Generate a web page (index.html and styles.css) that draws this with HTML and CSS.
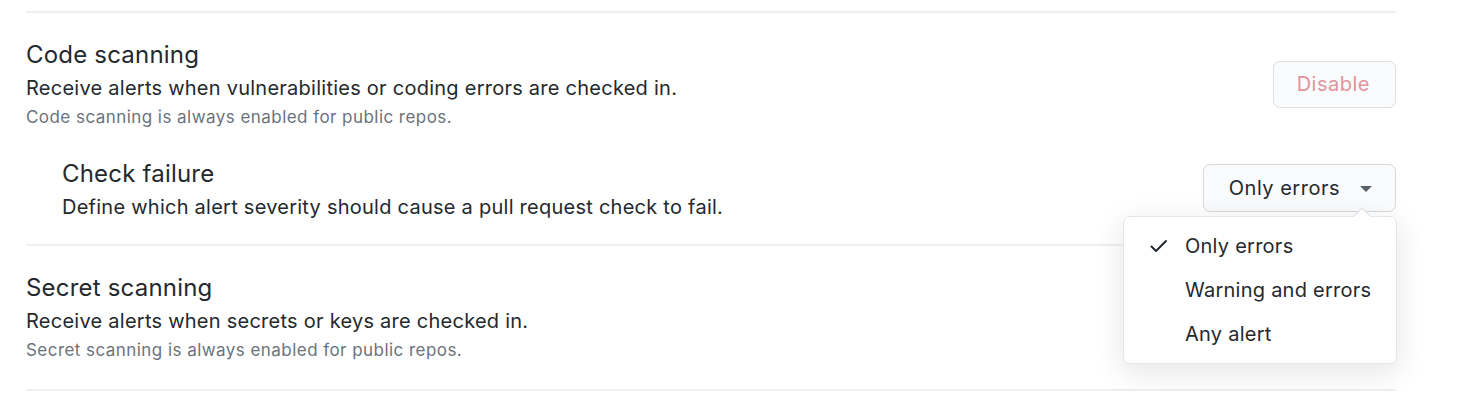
FILE: index.html
```html
<!DOCTYPE html>
<html>
<head>
<meta charset="utf-8">
<link rel="stylesheet" href="styles.css">
</head>
<body>
<div class="page">
  <section class="section first">
    <div class="row">
      <div class="info">
        <h2 class="title">Code scanning</h2>
        <p class="desc">Receive alerts when vulnerabilities or coding errors are checked in.</p>
        <p class="note">Code scanning is always enabled for public repos.</p>
      </div>
      <button class="btn btn-danger" disabled>Disable</button>
    </div>
    <div class="row sub">
      <div class="info">
        <h3 class="title">Check failure</h3>
        <p class="desc">Define which alert severity should cause a pull request check to fail.</p>
      </div>
      <div class="select-wrap">
        <button class="btn btn-select">Only errors <span class="caret"></span></button>
        <div class="menu">
          <div class="menu-item selected">
            <svg class="check" width="20" height="20" viewBox="0 0 20 20"><path d="M2.5 10.5 L7 15 L17 5" fill="none" stroke="#24292e" stroke-width="2" stroke-linecap="round" stroke-linejoin="round"/></svg>
            <span>Only errors</span>
          </div>
          <div class="menu-item"><span class="check-space"></span><span>Warning and errors</span></div>
          <div class="menu-item"><span class="check-space"></span><span>Any alert</span></div>
        </div>
      </div>
    </div>
  </section>
  <section class="section second">
    <div class="row">
      <div class="info">
        <h2 class="title">Secret scanning</h2>
        <p class="desc">Receive alerts when secrets or keys are checked in.</p>
        <p class="note">Secret scanning is always enabled for public repos.</p>
      </div>
    </div>
  </section>
  <div class="section end"></div>
</div>
</body>
</html>
```
FILE: styles.css
```css
* { box-sizing: border-box; }
body {
  margin: 0;
  background: #fff;
  font-family: Inter, "Liberation Sans", sans-serif;
  color: #24292e;
}
.page {
  padding: 11px 68px 0 26px;
}
.section {
  border-top: 2px solid #eeeff1;
}
.section.first { padding: 27px 0 24px; }
.section.second { padding: 27px 0 28px; }
.section.end { padding: 0; }
.row {
  display: flex;
  align-items: center;
  justify-content: space-between;
}
.row.sub {
  padding-left: 36px;
  margin-top: 31px;
}
.title {
  margin: 0;
  font-size: 24px;
  font-weight: 400;
  line-height: 30px;
  letter-spacing: 0.2px;
}
.desc {
  margin: 5px 0 0;
  font-size: 20px;
  line-height: 26px;
  letter-spacing: 0.25px;
}
.note {
  margin: 5px 0 0;
  font-size: 17px;
  line-height: 22px;
  letter-spacing: 0.45px;
  color: #6a737d;
}
.btn {
  font-family: inherit;
  font-size: 20px;
  letter-spacing: 0.5px;
  border: 1.5px solid #dcdfe3;
  background: #fafbfc;
  border-radius: 7px;
  height: 48px;
  padding: 0 24px;
  color: #24292e;
}
.btn-danger {
  color: #e3939a;
  height: 47px;
  padding: 0 25px 0 23px;
}
.select-wrap {
  position: relative;
  margin-bottom: 4px;
}
.btn-select {
  display: flex;
  align-items: center;
  gap: 20px;
  padding: 0 23px 0 25px;
  border-color: #d5d8dc;
}
.caret {
  width: 0;
  height: 0;
  border-left: 6px solid transparent;
  border-right: 6px solid transparent;
  border-top: 6px solid #586069;
  margin-top: 2px;
}
.menu {
  position: absolute;
  top: 52px;
  right: -1px;
  width: 274px;
  background: #fff;
  border: 1px solid #e4e6e9;
  border-radius: 7px;
  box-shadow: 0 8px 30px rgba(27,31,35,0.12);
  padding: 7px 0;
  z-index: 5;
}
.menu::before,
.menu::after {
  content: "";
  position: absolute;
  right: 25px;
  border-left: 9px solid transparent;
  border-right: 9px solid transparent;
}
.menu::before {
  top: -10px;
  border-bottom: 9px solid #e4e6e9;
}
.menu::after {
  top: -8px;
  border-bottom: 9px solid #fff;
}
.menu-item {
  display: flex;
  align-items: center;
  height: 44px;
  padding-left: 25px;
  font-size: 20px;
  letter-spacing: 0.25px;
  color: #24292e;
}
.check, .check-space {
  width: 20px;
  height: 20px;
  margin-right: 16px;
  flex: none;
}
```
